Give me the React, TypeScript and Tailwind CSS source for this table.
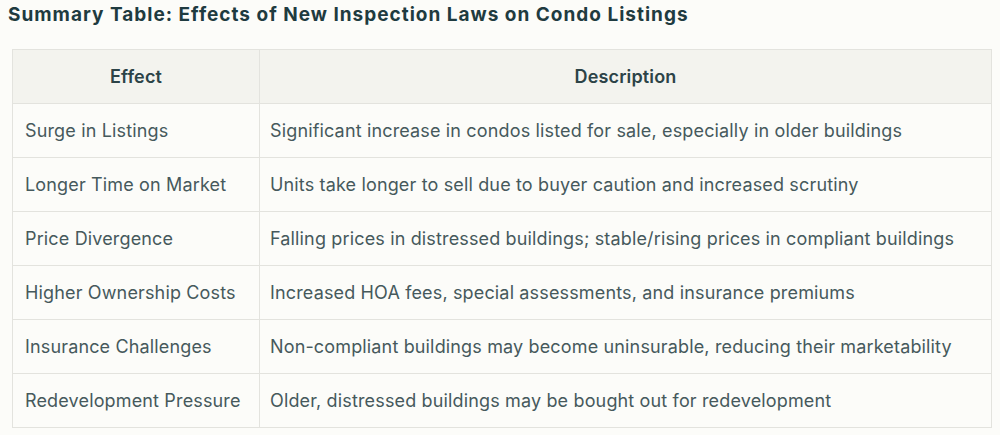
const rows: [string, string][] = [
  ["Surge in Listings", "Significant increase in condos listed for sale, especially in older buildings"],
  ["Longer Time on Market", "Units take longer to sell due to buyer caution and increased scrutiny"],
  ["Price Divergence", "Falling prices in distressed buildings; stable/rising prices in compliant buildings"],
  ["Higher Ownership Costs", "Increased HOA fees, special assessments, and insurance premiums"],
  ["Insurance Challenges", "Non-compliant buildings may become uninsurable, reducing their marketability"],
  ["Redevelopment Pressure", "Older, distressed buildings may be bought out for redevelopment"],
];

export default function App() {
  return (
    <div className="w-[1000px] h-[435px] bg-[#fcfcf9] font-['Inter','Liberation_Sans',sans-serif] pl-2 pt-[3px]">
      <h2 className="text-[19px] leading-[24px] font-bold tracking-[1px] text-[#1f3b40]">
        Summary Table: Effects of New Inspection Laws on Condo Listings
      </h2>

      <table className="mt-[22px] ml-1 w-[980px] border-collapse border border-[#e3e3de] text-[18px] tracking-[0.15px]">
        <thead>
          <tr className="h-[54px] bg-[#f3f3ee]">
            <th className="w-[247px] border border-[#e3e3de] font-semibold text-[#2c4347]">Effect</th>
            <th className="border border-[#e3e3de] font-semibold text-[#2c4347]">Description</th>
          </tr>
        </thead>
        <tbody>
          {rows.map(([effect, desc]) => (
            <tr key={effect} className="h-[54px]">
              <td className="border border-[#e3e3de] px-3 text-[#46595c]">{effect}</td>
              <td className="border border-[#e3e3de] px-[10px] text-[#46595c]">{desc}</td>
            </tr>
          ))}
        </tbody>
      </table>
    </div>
  );
}
